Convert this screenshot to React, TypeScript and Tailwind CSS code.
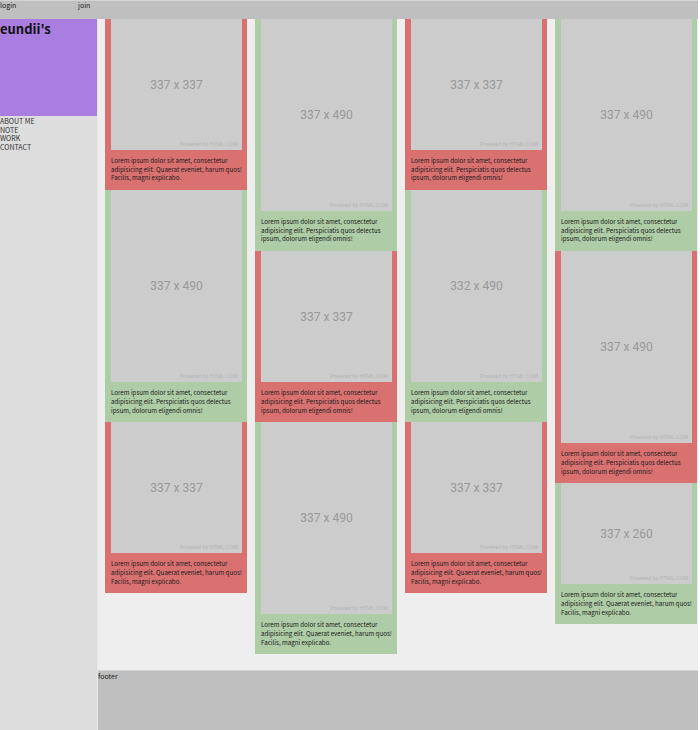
import React from 'react';

type Card = {
  w: number;
  h: number;
  color: 'red' | 'green';
  text: 'a' | 'b';
};

// each caption wraps to exactly three lines in the reference
const TEXTS = {
  a: ['Lorem ipsum dolor sit amet, consectetur', 'adipisicing elit. Quaerat eveniet, harum quos!', 'Facilis, magni explicabo.'],
  b: ['Lorem ipsum dolor sit amet, consectetur', 'adipisicing elit. Perspiciatis quos delectus', 'ipsum, dolorum eligendi omnis!'],
};

// placeholder heights, scaled to a 131px wide image
const HEIGHTS: Record<number, number> = { 337: 131, 490: 192, 260: 101 };

const COLUMNS: Card[][] = [
  [
    { w: 337, h: 337, color: 'red', text: 'a' },
    { w: 337, h: 490, color: 'green', text: 'b' },
    { w: 337, h: 337, color: 'red', text: 'a' },
  ],
  [
    { w: 337, h: 490, color: 'green', text: 'b' },
    { w: 337, h: 337, color: 'red', text: 'b' },
    { w: 337, h: 490, color: 'green', text: 'a' },
  ],
  [
    { w: 337, h: 337, color: 'red', text: 'b' },
    { w: 332, h: 490, color: 'green', text: 'b' },
    { w: 337, h: 337, color: 'red', text: 'a' },
  ],
  [
    { w: 337, h: 490, color: 'green', text: 'b' },
    { w: 337, h: 490, color: 'red', text: 'b' },
    { w: 337, h: 260, color: 'green', text: 'a' },
  ],
];

const Placeholder: React.FC<{ w: number; h: number }> = ({ w, h }) => (
  <div
    className="relative flex items-center justify-center bg-[#cccccc]"
    style={{ height: HEIGHTS[h] }}
  >
    <span className="font-['Roboto',sans-serif] text-[12px] text-[#999999]">
      {w} x {h}
    </span>
    <span className="absolute bottom-[2px] right-[4px] font-['Roboto',sans-serif] text-[5.5px] text-[#b5b5b5]">
      Powered by HTML.COM
    </span>
  </div>
);

const PhotoCard: React.FC<{ card: Card }> = ({ card }) => (
  <div className={`pl-[6px] pr-[5px] ${card.color === 'red' ? 'bg-[#d97171]' : 'bg-[#aecca6]'}`}>
    <Placeholder w={card.w} h={card.h} />
    <p className="pt-[7px] pb-[7px] text-[6.2px] leading-[8.7px] text-[#1a1a1a] whitespace-nowrap">
      {TEXTS[card.text].map((line, i) => (
        <span key={i} className="block">{line}</span>
      ))}
    </p>
  </div>
);

export default function App() {
  return (
    <div className="w-[698px] min-h-[730px] flex flex-col font-['Noto_Sans_CJK_KR','Noto_Sans',sans-serif]">
      <header className="h-[19px] flex bg-[#bfbfbf] border-t border-[#d4d4d4] text-[7px] leading-[9px] text-[#222]">
        <span className="w-[78px]">login</span>
        <span>join</span>
      </header>

      <div className="flex flex-1">
        <aside className="w-[98px] bg-[#dddddd] border-r border-[#e8e8e8]">
          <div className="h-[97px] bg-[#a97ee0]">
            <h1 className="pt-[1px] text-[13px] font-bold leading-[18px] text-[#111]">eundii's</h1>
          </div>
          <nav className="pt-[1px] text-[7px] leading-[8.7px] text-[#333]">
            <div>ABOUT ME</div>
            <div>NOTE</div>
            <div>WORK</div>
            <div>CONTACT</div>
          </nav>
        </aside>

        <div className="flex-1 flex flex-col">
          <main className="flex-1 flex items-start gap-[8px] bg-[#eeeeee] pl-[7px] pb-[15px]">
            {COLUMNS.map((col, i) => (
              <div key={i} className="w-[142px] flex flex-col">
                {col.map((card, j) => (
                  <PhotoCard key={j} card={card} />
                ))}
              </div>
            ))}
          </main>
          <footer className="h-[60px] bg-[#bfbfbf] border-t border-[#d6d6d6] text-[7px] leading-[10px] text-[#222]">
            footer
          </footer>
        </div>
      </div>
    </div>
  );
}
